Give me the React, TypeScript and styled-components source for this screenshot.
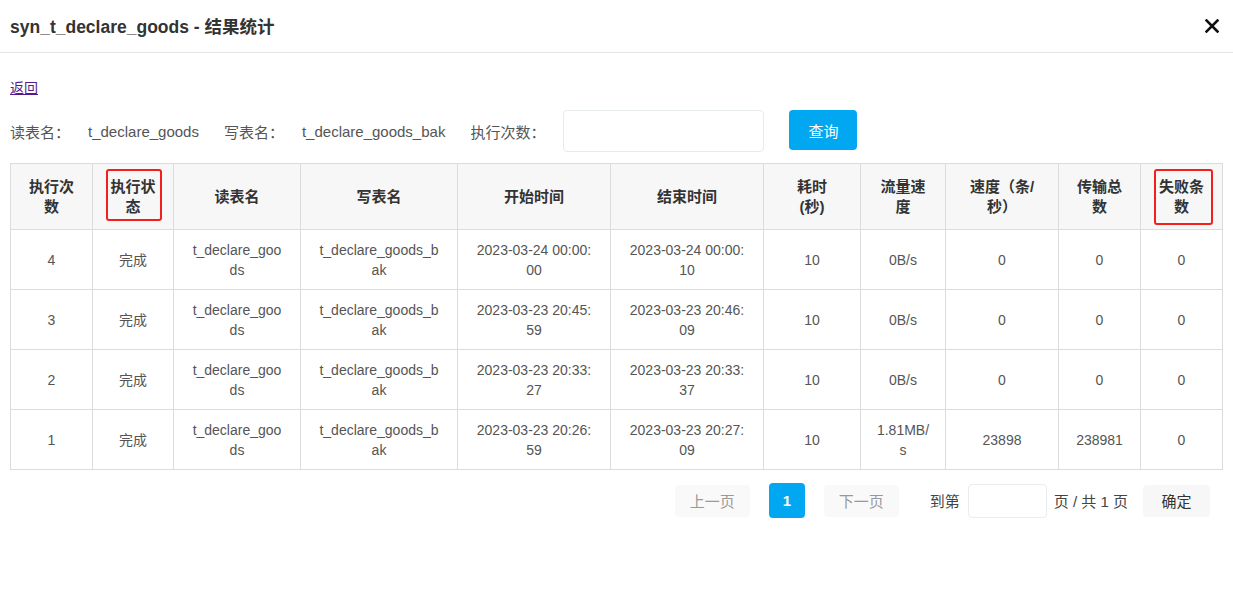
import React from "react";
import styled, { createGlobalStyle } from "styled-components";

interface RunRecord {
  times: number;
  status: string;
  readTable: string;
  writeTable: string;
  start: string;
  end: string;
  cost: number;
  flow: string;
  speed: number;
  total: number;
  failed: number;
}

interface Column {
  key: keyof RunRecord;
  lines: string[];
  width: number;
  mark?: { top: number; right: number; bottom: number; left: number };
}

const columns: Column[] = [
  { key: "times", lines: ["执行次", "数"], width: 82 },
  { key: "status", lines: ["执行状", "态"], width: 81, mark: { top: 5, right: 11, bottom: 8, left: 13 } },
  { key: "readTable", lines: ["读表名"], width: 127 },
  { key: "writeTable", lines: ["写表名"], width: 157 },
  { key: "start", lines: ["开始时间"], width: 153 },
  { key: "end", lines: ["结束时间"], width: 153 },
  { key: "cost", lines: ["耗时", "(秒)"], width: 97 },
  { key: "flow", lines: ["流量速", "度"], width: 85 },
  { key: "speed", lines: ["速度（条/", "秒）"], width: 113 },
  { key: "total", lines: ["传输总", "数"], width: 82 },
  { key: "failed", lines: ["失败条", "数"], width: 82, mark: { top: 5, right: 9, bottom: 4, left: 13 } },
];

const records: RunRecord[] = [
  { times: 4, status: "完成", readTable: "t_declare_goods", writeTable: "t_declare_goods_bak", start: "2023-03-24 00:00:00", end: "2023-03-24 00:00:10", cost: 10, flow: "0B/s", speed: 0, total: 0, failed: 0 },
  { times: 3, status: "完成", readTable: "t_declare_goods", writeTable: "t_declare_goods_bak", start: "2023-03-23 20:45:59", end: "2023-03-23 20:46:09", cost: 10, flow: "0B/s", speed: 0, total: 0, failed: 0 },
  { times: 2, status: "完成", readTable: "t_declare_goods", writeTable: "t_declare_goods_bak", start: "2023-03-23 20:33:27", end: "2023-03-23 20:33:37", cost: 10, flow: "0B/s", speed: 0, total: 0, failed: 0 },
  { times: 1, status: "完成", readTable: "t_declare_goods", writeTable: "t_declare_goods_bak", start: "2023-03-23 20:26:59", end: "2023-03-23 20:27:09", cost: 10, flow: "1.81MB/s", speed: 23898, total: 238981, failed: 0 },
];

const App: React.FC = () => {
  return (
    <>
      <GlobalStyle />
      <Dialog>
        <Header>
          <Title>syn_t_declare_goods - 结果统计</Title>
          <CloseButton aria-label="关闭">
            <svg width="14" height="14" viewBox="0 0 14 14">
              <path d="M1.5 1.5 L12.5 12.5 M12.5 1.5 L1.5 12.5" stroke="#111" strokeWidth="2.6" strokeLinecap="square" />
            </svg>
          </CloseButton>
        </Header>

        <Content>
          <BackLink href="#">返回</BackLink>

          <FilterBar>
            <FilterItem>
              <Label>读表名：</Label>
              <Value>t_declare_goods</Value>
            </FilterItem>
            <FilterItem>
              <Label>写表名：</Label>
              <Value>t_declare_goods_bak</Value>
            </FilterItem>
            <FilterItem>
              <Label>执行次数：</Label>
              <SearchInput />
            </FilterItem>
            <PrimaryButton>查询</PrimaryButton>
          </FilterBar>

          <Table>
            <colgroup>
              {columns.map((c) => (
                <Col key={c.key} $w={c.width} />
              ))}
            </colgroup>
            <thead>
              <tr>
                {columns.map((c) => (
                  <Th key={c.key}>
                    {c.lines.map((line, i) => (
                      <React.Fragment key={i}>
                        {i > 0 && <br />}
                        {line}
                      </React.Fragment>
                    ))}
                    {c.mark && (
                      <Mark
                        $top={c.mark.top}
                        $right={c.mark.right}
                        $bottom={c.mark.bottom}
                        $left={c.mark.left}
                      />
                    )}
                  </Th>
                ))}
              </tr>
            </thead>
            <tbody>
              {records.map((r) => (
                <tr key={r.times}>
                  {columns.map((c) => (
                    <Td key={c.key}>{String(r[c.key])}</Td>
                  ))}
                </tr>
              ))}
            </tbody>
          </Table>

          <Pager>
            <PageButton disabled>上一页</PageButton>
            <PageNumber>1</PageNumber>
            <PageButton disabled $offset={19}>下一页</PageButton>
            <PagerText $offset={31}>到第</PagerText>
            <JumpInput />
            <PagerText $offset={7}>页 / 共 1 页</PagerText>
            <ConfirmButton>确定</ConfirmButton>
          </Pager>
        </Content>
      </Dialog>
    </>
  );
};

export default App;

const GlobalStyle = createGlobalStyle`
  html, body {
    margin: 0;
    padding: 0;
    background: #fff;
  }
  body {
    font-family: "Liberation Sans", Arial, "Noto Sans CJK SC", sans-serif;
    color: #555;
  }
  * {
    box-sizing: border-box;
  }
`;

const Dialog = styled.div`
  width: 1233px;
  min-height: 594px;
  background: #fff;
`;

const Header = styled.div`
  height: 53px;
  display: flex;
  align-items: center;
  justify-content: space-between;
  padding: 0 14px 1px 10px;
  border-bottom: 1px solid #e5e5e5;
`;

const Title = styled.h3`
  margin: 0;
  font-size: 17.5px;
  font-weight: bold;
  color: #333;
`;

const CloseButton = styled.button`
  background: transparent;
  border: none;
  padding: 0;
  display: flex;
  cursor: pointer;
`;

const Content = styled.div`
  padding: 25px 11px 0 10px;
`;

const BackLink = styled.a`
  display: inline-block;
  font-size: 14px;
  line-height: 20px;
  color: #551a8b;
  text-decoration: underline;
`;

const FilterBar = styled.div`
  display: flex;
  align-items: center;
  height: 42px;
  margin-top: 12px;
  font-size: 15px;
  color: #555;
`;

const FilterItem = styled.div`
  display: flex;
  align-items: center;
  margin-right: 25px;
`;

const Label = styled.span`
  margin-right: 18px;
`;

const Value = styled.span``;

const SearchInput = styled.input`
  width: 201px;
  height: 42px;
  border: 1px solid #e6ebee;
  border-radius: 4px;
  outline: none;
`;

const PrimaryButton = styled.button`
  width: 68px;
  height: 40px;
  margin-top: -2px;
  border: none;
  border-radius: 4px;
  background: #02a7f2;
  color: #fff;
  font-family: inherit;
  font-size: 15px;
  cursor: pointer;
`;

const Table = styled.table`
  width: 1212px;
  margin-top: 11px;
  table-layout: fixed;
  border-collapse: collapse;
  border: 1px solid #dcdcdc;
`;

const Col = styled.col<{ $w: number }>`
  width: ${({ $w }) => $w}px;
`;

const Th = styled.th`
  position: relative;
  height: 66px;
  padding: 0 6px;
  background: #f7f7f7;
  border: 1px solid #dcdcdc;
  font-size: 15px;
  line-height: 20px;
  font-weight: bold;
  color: #333;
  text-align: center;
`;

const Mark = styled.span<{ $top: number; $right: number; $bottom: number; $left: number }>`
  position: absolute;
  top: ${({ $top }) => $top}px;
  right: ${({ $right }) => $right}px;
  bottom: ${({ $bottom }) => $bottom}px;
  left: ${({ $left }) => $left}px;
  border: 2px solid #f2201c;
  border-radius: 3px;
  pointer-events: none;
`;

const Td = styled.td`
  height: 60px;
  padding: 0 15.5px;
  border: 1px solid #dcdcdc;
  font-size: 14px;
  line-height: 20px;
  color: #555;
  text-align: center;
  word-break: break-all;
`;

const Pager = styled.div`
  display: flex;
  align-items: center;
  justify-content: flex-end;
  margin-top: 13px;
  padding-right: 12px;
  font-size: 15px;
`;

const PageButton = styled.button<{ $offset?: number }>`
  width: 75px;
  height: 32px;
  margin-left: ${({ $offset = 0 }) => $offset}px;
  border: none;
  border-radius: 4px;
  background: #f9f9f9;
  color: #999;
  font-family: inherit;
  font-size: 15px;
`;

const PageNumber = styled.button`
  width: 36px;
  height: 35px;
  margin-left: 19px;
  border: none;
  border-radius: 4px;
  background: #02a7f2;
  color: #fff;
  font-family: inherit;
  font-size: 15px;
  font-weight: bold;
`;

const PagerText = styled.span<{ $offset: number }>`
  margin-left: ${({ $offset }) => $offset}px;
  color: #444;
  white-space: nowrap;
`;

const JumpInput = styled.input`
  width: 79px;
  height: 34px;
  margin-left: 8px;
  border: 1px solid #e8edf0;
  border-radius: 4px;
  outline: none;
`;

const ConfirmButton = styled.button`
  width: 67px;
  height: 32px;
  margin-left: 15px;
  border: none;
  border-radius: 4px;
  background: #f7f7f7;
  color: #333;
  font-family: inherit;
  font-size: 15px;
`;
